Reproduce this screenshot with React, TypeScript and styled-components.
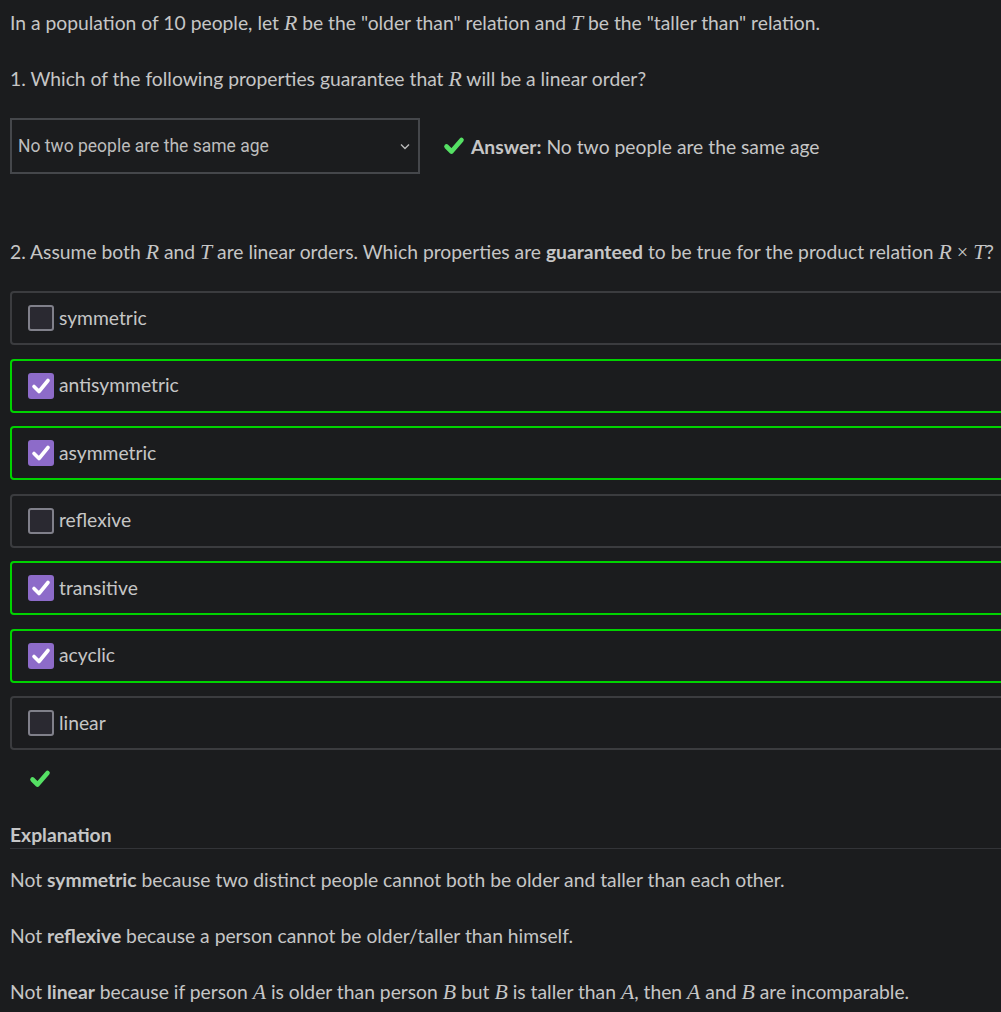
import React from "react";
import styled, { createGlobalStyle } from "styled-components";

const Global = createGlobalStyle`
  html, body { margin: 0; padding: 0; background: #1b1c1e; overflow: hidden; }
  body { font-family: "Lato", "Open Sans", sans-serif; color: #c6c6c6; }
`;

const Page = styled.div`
  width: 1030px;
  padding: 9px 0 0 10px;
  box-sizing: border-box;
  font-size: 19.3px;
  line-height: 27px;
`;

const P = styled.p<{ $mt?: number }>`
  margin: ${(p) => p.$mt ?? 0}px 0 0 0;
  white-space: nowrap;
`;

const M = styled.span`
  font-family: "Liberation Serif", "DejaVu Serif", serif;
  font-style: italic;
  font-size: 1.13em;
  line-height: 0;
`;

const Times = styled.span`
  font-family: "Liberation Serif", serif;
  font-size: 1.05em;
  margin: 0 5px;
`;

const Row = styled.div`
  display: flex;
  align-items: center;
  margin-top: 26px;
`;

const Select = styled.div`
  width: 410px;
  height: 56px;
  box-sizing: border-box;
  border: 2px solid #45474b;
  display: flex;
  align-items: center;
  justify-content: space-between;
  padding: 0 8px 0 6px;
  font-family: "Roboto", sans-serif;
  font-size: 17.5px;
  color: #bdbdbd;
`;

const Answer = styled.div`
  display: flex;
  align-items: center;
  gap: 6px;
  margin-left: 23px;
  white-space: nowrap;
`;

const CheckSvg = styled.svg`
  width: 22px;
  height: 20px;
  flex: none;
`;

const Ok = () => (
  <CheckSvg viewBox="0 0 22 20">
    <path
      d="M3.5 10.5 L8.5 15.5 L18.5 4"
      fill="none"
      stroke="#55e064"
      strokeWidth="4.6"
      strokeLinecap="round"
      strokeLinejoin="round"
    />
  </CheckSvg>
);

const Options = styled.div`
  display: flex;
  flex-direction: column;
  gap: 13.5px;
  margin-top: 25px;
`;

const Option = styled.label<{ $correct: boolean }>`
  height: 54px;
  box-sizing: border-box;
  border: 2px solid ${(p) => (p.$correct ? "#00d200" : "#3b3c3f")};
  border-radius: 4px;
  display: flex;
  align-items: center;
  padding-left: 16px;
  padding-bottom: 2px;
  gap: 5px;
`;

const Box = styled.span<{ $checked: boolean }>`
  width: 26px;
  height: 26px;
  box-sizing: border-box;
  border-radius: 3px;
  margin-top: 2px;
  border: ${(p) => (p.$checked ? "none" : "2px solid #80808a")};
  background: ${(p) => (p.$checked ? "#8d6bc9" : "#2a2931")};
  display: flex;
  align-items: center;
  justify-content: center;
`;

const Result = styled.div`
  height: 58px;
  display: flex;
  align-items: center;
  padding-left: 19px;
`;

const H = styled.div`
  margin-top: 13px;
  font-weight: bold;
  border-bottom: 1px solid #333438;
`;

const options: [string, boolean][] = [
  ["symmetric", false],
  ["antisymmetric", true],
  ["asymmetric", true],
  ["reflexive", false],
  ["transitive", true],
  ["acyclic", true],
  ["linear", false],
];

export default function App() {
  return (
    <Page>
      <Global />
      <P>
        In a population of 10 people, let <M>R</M> be the "older than" relation and <M>T</M> be the
        "taller than" relation.
      </P>
      <P $mt={29}>
        1. Which of the following properties guarantee that <M>R</M> will be a linear order?
      </P>
      <Row>
        <Select>
          <span>No two people are the same age</span>
          <svg width="10" height="7" viewBox="0 0 10 7">
            <path d="M1 1.5 L5 5.5 L9 1.5" fill="none" stroke="#bbb" strokeWidth="1.4" />
          </svg>
        </Select>
        <Answer>
          <Ok />
          <span>
            <b>Answer:</b> No two people are the same age
          </span>
        </Answer>
      </Row>
      <P $mt={64}>
        2. Assume both <M>R</M> and <M>T</M> are linear orders. Which properties are{" "}
        <b>guaranteed</b> to be true for the product relation <M>R</M>
        <Times>×</Times>
        <M>T</M>?
      </P>
      <Options>
        {options.map(([name, c]) => (
          <Option key={name} $correct={c}>
            <Box $checked={c}>
              {c && (
                <svg width="20" height="18" viewBox="0 0 20 18">
                  <path
                    d="M3 9.5 L8 14.5 L17 3.5"
                    fill="none"
                    stroke="#fff"
                    strokeWidth="3.6"
                    strokeLinecap="round"
                    strokeLinejoin="round"
                  />
                </svg>
              )}
            </Box>
            <span>{name}</span>
          </Option>
        ))}
      </Options>
      <Result>
        <Ok />
      </Result>
      <H>Explanation</H>
      <P $mt={17}>
        Not <b>symmetric</b> because two distinct people cannot both be older and taller than each
        other.
      </P>
      <P $mt={29}>
        Not <b>reflexive</b> because a person cannot be older/taller than himself.
      </P>
      <P $mt={29}>
        Not <b>linear</b> because if person <M>A</M> is older than person <M>B</M> but <M>B</M> is
        taller than <M>A</M>, then <M>A</M> and <M>B</M> are incomparable.
      </P>
    </Page>
  );
}
